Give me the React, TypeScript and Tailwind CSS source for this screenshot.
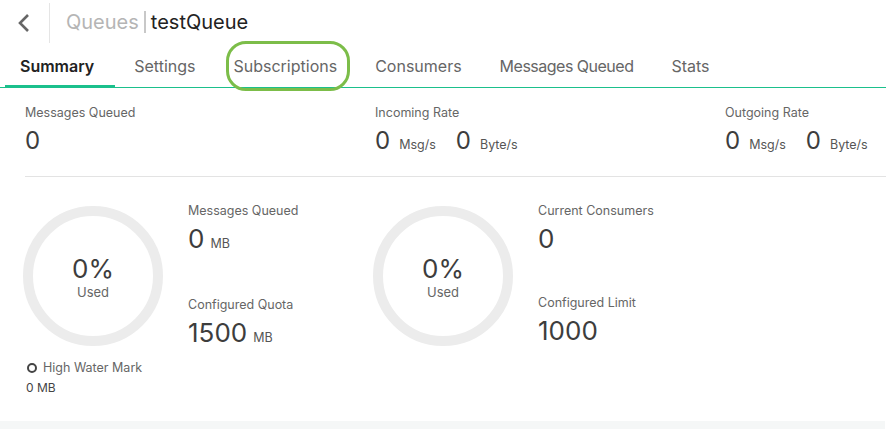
import React from "react";

const Ring = () => {
  return (
    <div className="relative w-[140px] h-[140px] flex-shrink-0">
      <svg width="140" height="140" viewBox="0 0 140 140" className="absolute inset-0">
        <circle cx="70" cy="70" r="65" fill="none" stroke="#ececec" strokeWidth="10" />
      </svg>
      <div className="absolute inset-0 flex flex-col items-center justify-center">
        <p className="text-[26px] leading-[30px] text-[#3d3d3d] mt-[1px]">0%</p>
        <p className="text-[13px] leading-4 text-[#666]">Used</p>
      </div>
    </div>
  );
};

const Stat = ({ label, value, unit }: { label: string; value: string; unit?: string }) => {
  return (
    <div>
      <p className="text-[12.5px] leading-4 text-[#666]">{label}</p>
      <p className="mt-[5px] text-[#3d3d3d] leading-[30px]">
        <span className="text-[26px]">{value}</span>
        {unit && <span className="text-[12.5px] text-[#555] ml-[6px]">{unit}</span>}
      </p>
    </div>
  );
};

const App = () => {
  const tabs = ["Summary", "Settings", "Subscriptions", "Consumers", "Messages Queued", "Stats"];
  return (
    <div className="w-[886px] h-[429px] bg-white flex flex-col overflow-hidden" style={{ fontFamily: "Inter, 'Noto Sans', sans-serif" }}>
      {/* header */}
      <div className="h-[44px] flex items-center">
        <div className="w-[50px] h-[40px] mt-[2px] border-r border-[#e5e5e5] flex items-center justify-center">
          <svg width="14" height="20" viewBox="0 0 14 20" className="ml-[-2px]">
            <path d="M11 2 L3 10 L11 18" fill="none" stroke="#666" strokeWidth="2.6" />
          </svg>
        </div>
        <div className="pl-4 text-[20px] flex items-center">
          <span className="text-[#b5b5b5]">Queues</span>
          <span className="mx-[5px] w-[2px] h-[22px] bg-[#c8c8c8]" />
          <span className="text-[#222]">testQueue</span>
        </div>
      </div>

      {/* tabs */}
      <div className="border-b border-[#1bc08c] flex h-[44px]">
        {tabs.map((t, i) => (
          <div
            key={t}
            className={
              i === 0
                ? "ml-[5px] pl-[15px] pr-[21px] flex items-center text-[16px] font-semibold text-[#222] border-b-[3px] border-[#1bc08c] mb-[-1px] pt-[3px]"
                : i === 4
                ? "px-[19px] flex items-center text-[16px] text-[#666] tracking-[-0.5px]"
                : "relative px-[19px] flex items-center text-[16px] text-[#666]"
            }
          >
            {t}
            {i === 2 && (
              <div className="absolute left-[12px] right-[6px] top-[-3px] bottom-[-4px] rounded-[20px] border-[3px] border-[#7cbd49]" />
            )}
          </div>
        ))}
      </div>

      {/* rates */}
      <div className="pl-[25px]">
        <div className="flex pt-[17px] pb-[16px]">
          <div className="w-[350px] flex-shrink-0">
            <p className="text-[12.5px] leading-4 text-[#666]">Messages Queued</p>
            <p className="mt-[5px] text-[24px] leading-[30px] text-[#3d3d3d]">0</p>
          </div>
          {["Incoming Rate", "Outgoing Rate"].map((l, i) => (
            <div key={l} className={i === 0 ? "w-[350px] flex-shrink-0" : "flex-1"}>
              <p className="text-[12.5px] leading-4 text-[#666]">{l}</p>
              <p className="mt-[5px] leading-[30px] text-[#3d3d3d]">
                <span className="text-[24px]">0</span>
                <span className="text-[12.5px] text-[#555] ml-[9px]">Msg/s</span>
                <span className="text-[24px] ml-[20px]">0</span>
                <span className="text-[12.5px] text-[#555] ml-[9px]">Byte/s</span>
              </p>
            </div>
          ))}
        </div>
        <div className="border-t border-[#e3e3e3]" />
      </div>

      {/* usage */}
      <div className="flex pl-[23px] pt-[29px]">
        <div className="w-[350px] flex-shrink-0">
          <div className="flex">
            <Ring />
            <div className="ml-[25px] mt-[-3px]">
              <Stat label="Messages Queued" value="0" unit="MB" />
              <div className="mt-[38px]">
                <Stat label="Configured Quota" value="1500" unit="MB" />
              </div>
            </div>
          </div>
          <div className="mt-[7px] ml-[4px] flex items-center text-[12.5px] leading-4 text-[#666]">
            <span className="w-[10px] h-[10px] rounded-full border-2 border-[#444] mr-[6px]" />
            High Water Mark
          </div>
          <p className="mt-[4px] ml-[3px] text-[12px] leading-4 text-[#444]">0 MB</p>
        </div>
        <div className="w-[350px] flex-shrink-0">
          <div className="flex">
            <Ring />
            <div className="ml-[25px] mt-[-3px]">
              <Stat label="Current Consumers" value="0" />
              <div className="mt-[38px]">
                <Stat label="Configured Limit" value="1000" />
              </div>
            </div>
          </div>
        </div>
      </div>

      <div className="flex-1" />
      <div className="h-[8px] bg-[#f5f7f7] mr-[1px]" />
    </div>
  );
};

export default App;
